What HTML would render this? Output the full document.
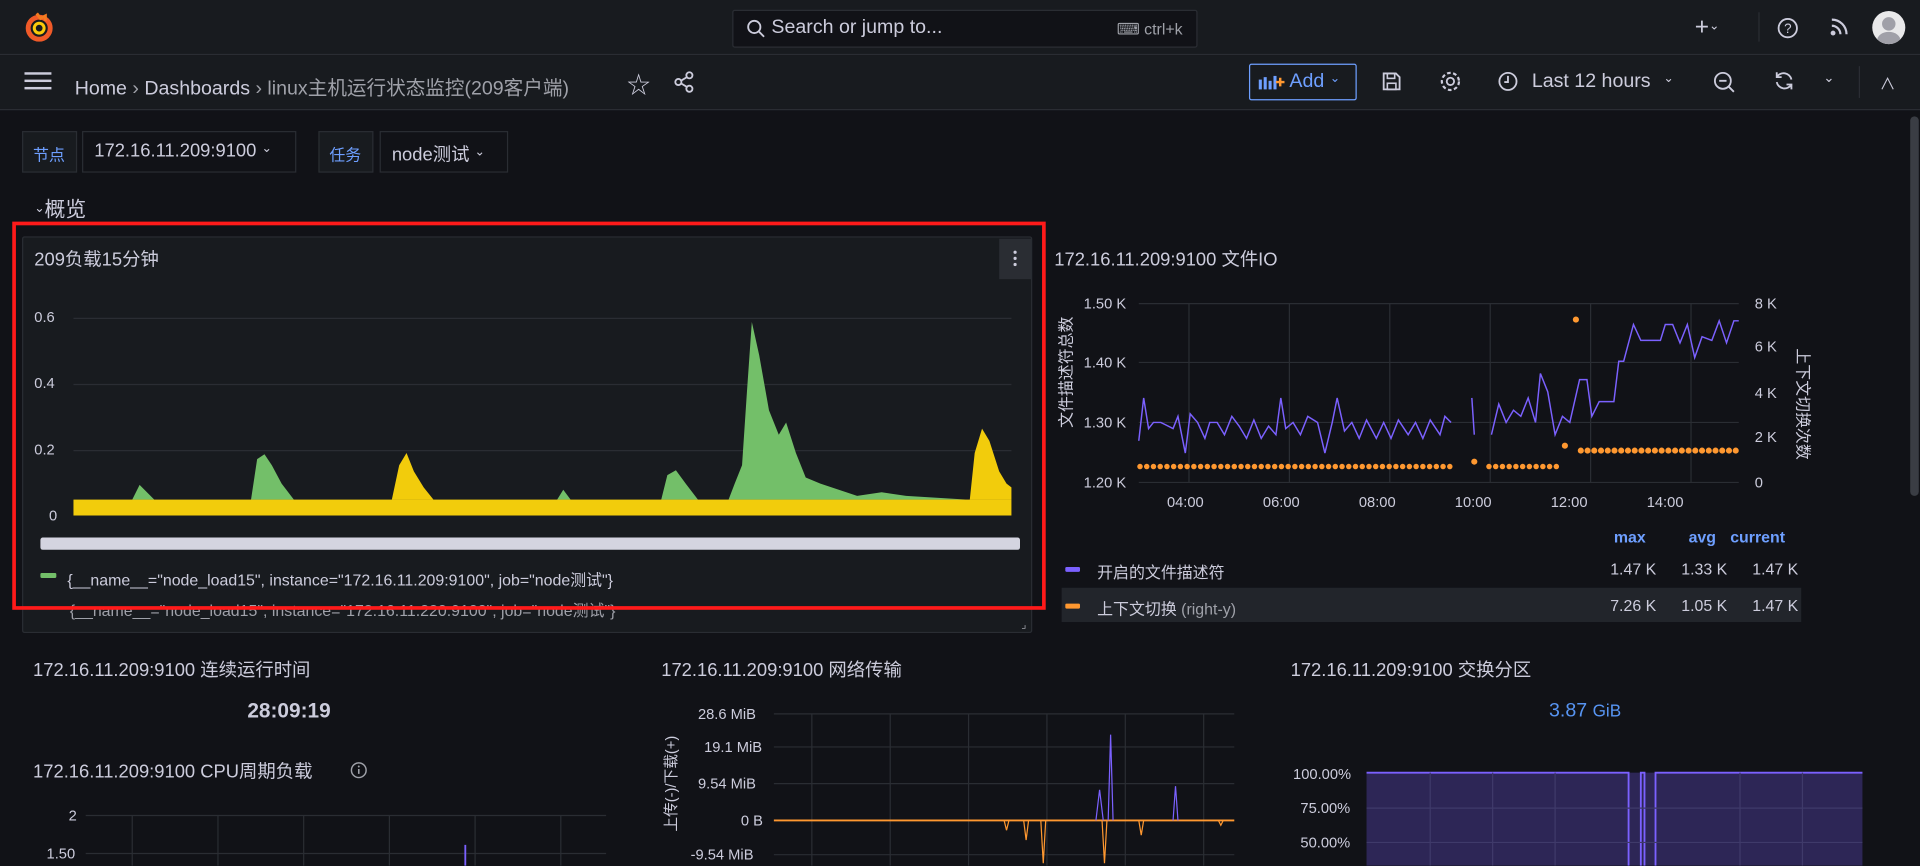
<!DOCTYPE html>
<html><head><meta charset="utf-8"><style>
*{box-sizing:border-box;margin:0;padding:0}
html,body{width:1920px;height:866px;overflow:hidden;background:#111217}
#w{position:absolute;left:0;top:0;width:1568px;height:707px;transform:scale(1.22449);transform-origin:0 0;font-family:"Liberation Sans","Noto Sans CJK SC",sans-serif;color:#ccccdc;font-size:14px}
.a{position:absolute;white-space:nowrap}
.bar{position:absolute;left:0;width:1568px;background:#181b1f;border-bottom:1px solid #2a2d33}
.lbl{font-size:12px;color:#ccccdc}
.chev{display:inline-block;font-size:10px;vertical-align:4px}
</style></head><body><div id="w">
<div class="bar" style="top:0;height:45px"></div>
<div class="bar" style="top:45px;height:45px"></div>
<svg class="a" style="left:20px;top:9px" width="24" height="26" viewBox="0 0 24 26"><circle cx="12" cy="14" r="9" fill="none" stroke="#f05a28" stroke-width="4"/><circle cx="12" cy="14" r="4" fill="none" stroke="#fbca0a" stroke-width="2.5"/><path d="M10 2l3 4 4-2 0 4" stroke="#f47a20" stroke-width="2.5" fill="none"/></svg>
<div class="a" style="left:598px;top:8px;width:380px;height:31px;background:#111217;border:1px solid #2a2d33;border-radius:2px"></div>
<svg class="a" style="left:609px;top:15px" width="16" height="16"><circle cx="7" cy="7" r="5" fill="none" stroke="#ccccdc" stroke-width="1.5"/><path d="M11 11l4 4" stroke="#ccccdc" stroke-width="1.5"/></svg>
<div class="a" style="left:630px;top:14px;font-size:16px;color:#ccccdc">Search or jump to...</div>
<div class="a" style="left:912px;top:16px;font-size:13px;color:#9fa1a9">⌨ ctrl+k</div>
<div class="a" style="left:1384px;top:11px;font-size:20px;color:#ccccdc">+<span class="chev"> ⌄</span></div>
<div class="a" style="left:1436px;top:10px;width:1px;height:24px;background:#2a2d33"></div>
<svg class="a" style="left:1451px;top:14px" width="18" height="18"><circle cx="9" cy="9" r="7.5" fill="none" stroke="#ccccdc" stroke-width="1.5"/><text x="6" y="13" font-size="11" fill="#ccccdc" font-family="Liberation Sans">?</text></svg>
<svg class="a" style="left:1494px;top:14px" width="16" height="16"><circle cx="3" cy="13" r="2" fill="#ccccdc"/><path d="M2 7a7 7 0 0 1 7 7M2 2a12 12 0 0 1 12 12" stroke="#ccccdc" stroke-width="1.8" fill="none"/></svg>
<div class="a" style="left:1529px;top:9px;width:27px;height:27px;border-radius:50%;background:#e9e9ea;overflow:hidden"><div style="position:absolute;left:8px;top:5px;width:11px;height:11px;border-radius:50%;background:#a0a0a8"></div><div style="position:absolute;left:4px;top:17px;width:19px;height:14px;border-radius:50%;background:#a0a0a8"></div></div>
<div class="a" style="left:20px;top:59px;width:22px;height:2px;background:#ccccdc;box-shadow:0 6px 0 #ccccdc,0 12px 0 #ccccdc"></div>
<div class="a" style="left:61px;top:58px;font-size:16px;color:#ccccdc">Home <span style="color:#9fa1a9">›</span> Dashboards <span style="color:#9fa1a9">›</span> <span style="color:#9fa1a9">linux主机运行状态监控(209客户端)</span></div>
<div class="a" style="left:512px;top:55px;font-size:19px;color:#ccccdc">☆</div>
<svg class="a" style="left:550px;top:58px" width="18" height="18"><circle cx="13" cy="3.5" r="2.5" fill="none" stroke="#ccccdc" stroke-width="1.5"/><circle cx="4" cy="9" r="2.5" fill="none" stroke="#ccccdc" stroke-width="1.5"/><circle cx="13" cy="14.5" r="2.5" fill="none" stroke="#ccccdc" stroke-width="1.5"/><path d="M6 8l5-3M6 10l5 3" stroke="#ccccdc" stroke-width="1.5"/></svg>
<div class="a" style="left:1020px;top:52px;width:88px;height:30px;border:1px solid #6e9fff;border-radius:2px"></div>
<svg class="a" style="left:1027px;top:60px" width="22" height="14"><rect x="1" y="5" width="2.5" height="8" fill="#6e9fff"/><rect x="5" y="3" width="2.5" height="10" fill="#6e9fff"/><rect x="9" y="6" width="2.5" height="7" fill="#6e9fff"/><rect x="13" y="2" width="2.5" height="11" fill="#6e9fff"/><path d="M15 7h7M18.5 3.5v7" stroke="#ff9830" stroke-width="2"/></svg>
<div class="a" style="left:1053px;top:58px;font-size:16px;color:#6e9fff">Add <span class="chev">⌄</span></div>
<svg class="a" style="left:1128px;top:58px" width="17" height="17"><path d="M2 2h10l3 3v10H2z" fill="none" stroke="#ccccdc" stroke-width="1.5"/><rect x="5" y="2" width="6" height="4" fill="none" stroke="#ccccdc" stroke-width="1.3"/><rect x="5" y="10" width="7" height="5" fill="none" stroke="#ccccdc" stroke-width="1.3"/></svg>
<svg class="a" style="left:1175px;top:57px" width="19" height="19"><circle cx="9.5" cy="9.5" r="3" fill="none" stroke="#ccccdc" stroke-width="1.5"/><circle cx="9.5" cy="9.5" r="7" fill="none" stroke="#ccccdc" stroke-width="1.8" stroke-dasharray="3 2"/></svg>
<svg class="a" style="left:1223px;top:58px" width="17" height="17"><circle cx="8.5" cy="8.5" r="7" fill="none" stroke="#ccccdc" stroke-width="1.5"/><path d="M8.5 4v5h-3" stroke="#ccccdc" stroke-width="1.5" fill="none"/></svg>
<div class="a" style="left:1251px;top:58px;font-size:16px;color:#ccccdc">Last 12 hours <span class="chev" style="margin-left:6px">⌄</span></div>
<svg class="a" style="left:1399px;top:58px" width="18" height="18"><circle cx="8" cy="8" r="6.5" fill="none" stroke="#ccccdc" stroke-width="1.5"/><path d="M5 8h6M13 13l4 4" stroke="#ccccdc" stroke-width="1.5"/></svg>
<svg class="a" style="left:1448px;top:57px" width="18" height="18"><path d="M15 8a6.5 6.5 0 0 0-12-2M3 10a6.5 6.5 0 0 0 12 2" fill="none" stroke="#ccccdc" stroke-width="1.5"/><path d="M3 2v4h4M15 16v-4h-4" fill="none" stroke="#ccccdc" stroke-width="1.5"/></svg>
<div class="a" style="left:1489px;top:57px;font-size:11px">⌄</div>
<div class="a" style="left:1518px;top:54px;width:1px;height:26px;background:#2a2d33"></div>
<div class="a" style="left:1535px;top:58px;font-size:13px">∧</div>
<div class="a" style="left:1560px;top:95px;width:7px;height:310px;background:#3a3d44;border-radius:4px"></div>
<div class="a" style="left:18px;top:107px;width:45px;height:34px;background:#181b1f;border:1px solid #2a2d33"></div>
<div class="a" style="left:27px;top:116px;font-size:13px;color:#6e9fff">节点</div>
<div class="a" style="left:67px;top:107px;width:175px;height:34px;background:#111217;border:1px solid #2a2d33"></div>
<div class="a" style="left:77px;top:115px;font-size:15px">172.16.11.209:9100 <span class="chev">⌄</span></div>
<div class="a" style="left:260px;top:107px;width:45px;height:34px;background:#181b1f;border:1px solid #2a2d33"></div>
<div class="a" style="left:269px;top:116px;font-size:13px;color:#6e9fff">任务</div>
<div class="a" style="left:310px;top:107px;width:105px;height:34px;background:#111217;border:1px solid #2a2d33"></div>
<div class="a" style="left:320px;top:115px;font-size:15px">node测试 <span class="chev">⌄</span></div>
<div class="a" style="left:28px;top:157px;font-size:17px"><span class="chev">⌄</span>概览</div>
<div class="a" style="left:18px;top:193px;width:825px;height:324px;background:#181b1f;border:1px solid #2a2d33;border-radius:2px"></div>
<div class="a" style="left:28px;top:201px;font-size:15px">209负载15分钟</div>
<div class="a" style="left:816px;top:195px;width:26px;height:33px;background:#2a2d33"></div>
<svg class="a" style="left:826px;top:203px" width="6" height="16"><circle cx="3" cy="3" r="1.3" fill="#ccccdc"/><circle cx="3" cy="8" r="1.3" fill="#ccccdc"/><circle cx="3" cy="13" r="1.3" fill="#ccccdc"/></svg>
<div class="a lbl" style="left:28px;top:252px">0.6</div>
<div class="a lbl" style="left:28px;top:306px">0.4</div>
<div class="a lbl" style="left:28px;top:360px">0.2</div>
<div class="a lbl" style="left:40px;top:414px">0</div>
<svg class="a" style="left:0;top:0" width="860" height="520">
<g stroke="#2a2d33" stroke-width="1"><path d="M60 260H826M60 314H826M60 368H826"/></g>
<path fill="#73bf69" d="M60 408 L108 408 L114 396 L120 402 L126 408 L205 408 L210 375 L216 371 L222 380 L230 395 L240 408 L455 408 L460 400 L466 408 L540 408 L545 388 L552 384 L560 395 L570 408 L595 408 L600 395 L606 380 L610 320 L614 263 L620 290 L628 335 L636 355 L642 345 L650 370 L658 390 L670 395 L685 400 L700 405 L720 402 L740 405 L790 408 Z"/>
<path fill="#f2cc0c" d="M320 408 L326 380 L332 370 L338 385 L346 398 L354 408 Z M792 408 L796 370 L802 350 L808 360 L816 385 L822 395 L826 398 L826 408 Z"/>
<rect x="60" y="408" width="766" height="13" fill="#f2cc0c"/>
<rect x="33" y="439" width="800" height="10" rx="2" fill="#d4d4e0"/>
<rect x="33" y="468" width="13" height="4" rx="1" fill="#73bf69"/>
</svg>
<div class="a" style="left:55px;top:463px;font-size:13px">{__name__="node_load15", instance="172.16.11.209:9100", job="node测试"}</div>
<div class="a" style="left:57px;top:488px;font-size:13px;color:#9fa1a9">{__name__="node_load15", instance="172.16.11.220:9100", job="node测试"}</div>
<div class="a" style="left:10px;top:181px;width:844px;height:317px;border:3px solid #ff1a1a"></div>
<div class="a" style="left:861px;top:201px;font-size:15px">172.16.11.209:9100 文件IO</div>
<svg class="a" style="left:0;top:0" width="1568" height="520">
<g stroke="#2a2d33"><path d="M930 248H1420M930 296H1420M930 345H1420M930 394H1420M971 248V394M1053 248V394M1135 248V394M1217 248V394M1299 248V394M1381 248V394"/></g>
<polyline fill="none" stroke="#7b61ff" stroke-width="1.2" points="930,360 934,325 938,350 942,345 948,345 952,347 958,350 962,340 968,370 972,338 978,345 984,358 988,345 994,345 1000,355 1006,340 1012,348 1018,358 1024,343 1030,358 1036,348 1042,355 1046,325 1050,350 1056,345 1062,355 1068,340 1076,345 1082,370 1088,345 1092,325 1098,352 1104,345 1110,358 1116,343 1124,358 1130,345 1136,358 1142,343 1150,355 1156,345 1162,358 1168,343 1176,355 1180,340 1185,345"/>
<polyline fill="none" stroke="#7b61ff" stroke-width="1.2" points="1202,325 1204,355"/>
<polyline fill="none" stroke="#7b61ff" stroke-width="1.2" points="1218,355 1224,330 1230,345 1236,335 1242,340 1248,325 1254,345 1258,305 1264,320 1270,355 1276,340 1282,345 1290,310 1296,310 1300,340 1306,328 1318,328 1322,295 1326,295 1334,265 1340,278 1356,278 1360,265 1366,265 1372,280 1378,265 1384,292 1390,275 1398,278 1404,262 1410,280 1416,262 1420,262"/>
<g fill="#ff9830">
<path d="M931 381H1186" stroke="#ff9830" stroke-width="4.5" stroke-linecap="round" stroke-dasharray="0 5.5"/>
<path d="M1216 381H1276" stroke="#ff9830" stroke-width="4.5" stroke-linecap="round" stroke-dasharray="0 5.5"/>
<path d="M1291 368H1418" stroke="#ff9830" stroke-width="5" stroke-linecap="round" stroke-dasharray="0 5.5"/>
<circle cx="1204" cy="377" r="2.5"/><circle cx="1278" cy="364" r="2.5"/><circle cx="1287" cy="261" r="2.5"/>
</g>
<rect x="867" y="480" width="604" height="28" fill="#22252b"/>
<rect x="870" y="463" width="12" height="4" rx="1" fill="#7b61ff"/>
<rect x="870" y="493" width="12" height="4" rx="1" fill="#ff9830"/>
<text x="-304" y="875" transform="rotate(-90)" font-size="13" fill="#ccccdc" font-family="Liberation Sans,Noto Sans CJK SC,sans-serif" text-anchor="middle">文件描述符总数</text>
<text x="1468" y="330" transform="rotate(90 1468 330)" font-size="13" fill="#ccccdc" font-family="Liberation Sans,Noto Sans CJK SC,sans-serif" text-anchor="middle">上下文切换次数</text>
</svg>
<div class="a lbl" style="left:885px;top:241px">1.50 K</div>
<div class="a lbl" style="left:885px;top:289px">1.40 K</div>
<div class="a lbl" style="left:885px;top:338px">1.30 K</div>
<div class="a lbl" style="left:885px;top:387px">1.20 K</div>
<div class="a lbl" style="left:1433px;top:241px">8 K</div>
<div class="a lbl" style="left:1433px;top:276px">6 K</div>
<div class="a lbl" style="left:1433px;top:314px">4 K</div>
<div class="a lbl" style="left:1433px;top:350px">2 K</div>
<div class="a lbl" style="left:1433px;top:387px">0</div>
<div class="a lbl" style="left:953px;top:403px;width:520px;word-spacing:45px">04:00 06:00 08:00 10:00 12:00 14:00</div>
<div class="a" style="left:1318px;top:431px;font-size:13px;font-weight:bold;color:#6e9fff">max</div>
<div class="a" style="left:1379px;top:431px;font-size:13px;font-weight:bold;color:#6e9fff">avg</div>
<div class="a" style="left:1413px;top:431px;font-size:13px;font-weight:bold;color:#6e9fff">current</div>
<div class="a" style="left:896px;top:457px;font-size:13px">开启的文件描述符</div>
<div class="a" style="left:1315px;top:457px;font-size:13px">1.47 K</div><div class="a" style="left:1373px;top:457px;font-size:13px">1.33 K</div><div class="a" style="left:1431px;top:457px;font-size:13px">1.47 K</div>
<div class="a" style="left:896px;top:487px;font-size:13px">上下文切换 <span style="color:#9fa1a9">(right-y)</span></div>
<div class="a" style="left:1315px;top:487px;font-size:13px">7.26 K</div><div class="a" style="left:1373px;top:487px;font-size:13px">1.05 K</div><div class="a" style="left:1431px;top:487px;font-size:13px">1.47 K</div>
<div class="a" style="left:834px;top:505px;font-size:9px;color:#9fa1a9">⌟</div>
<div class="a" style="left:27px;top:536px;font-size:15px">172.16.11.209:9100 连续运行时间</div>
<div class="a" style="left:202px;top:571px;font-size:17px;font-weight:bold">28:09:19</div>
<div class="a" style="left:27px;top:619px;font-size:15px">172.16.11.209:9100 CPU周期负载</div>
<svg class="a" style="left:286px;top:622px" width="14" height="14"><circle cx="7" cy="7" r="6" fill="none" stroke="#9fa1a9" stroke-width="1.2"/><path d="M7 6v4" stroke="#9fa1a9" stroke-width="1.3"/><circle cx="7" cy="4" r="0.8" fill="#9fa1a9"/></svg>
<div class="a lbl" style="left:56px;top:659px">2</div>
<div class="a lbl" style="left:38px;top:690px">1.50</div>
<div class="a" style="left:540px;top:536px;font-size:15px">172.16.11.209:9100 网络传输</div>
<div class="a" style="left:1054px;top:536px;font-size:15px">172.16.11.209:9100 交换分区</div>
<div class="a" style="left:1265px;top:572px;font-size:16px;color:#5794f2">3.87 <span style="font-size:14px">GiB</span></div>
<div class="a lbl" style="left:570px;top:576px">28.6 MiB</div>
<div class="a lbl" style="left:575px;top:603px">19.1 MiB</div>
<div class="a lbl" style="left:570px;top:633px">9.54 MiB</div>
<div class="a lbl" style="left:605px;top:663px">0 B</div>
<div class="a lbl" style="left:564px;top:691px">-9.54 MiB</div>
<div class="a lbl" style="left:1056px;top:625px">100.00%</div>
<div class="a lbl" style="left:1062px;top:653px">75.00%</div>
<div class="a lbl" style="left:1062px;top:681px">50.00%</div>
<svg class="a" style="left:0;top:520px" width="1568" height="187">
<g stroke="#2a2d33"><path d="M70 146H495M70 177H495M108 146V187M178 146V187M248 146V187M318 146V187M388 146V187M458 146V187"/>
<path d="M632 63H1008M632 90H1008M632 120H1008M632 178H1008M663 63V187M727 63V187M791 63V187M855 63V187M919 63V187M983 63V187"/></g>
<path d="M380 170V187" stroke="#7b61ff" stroke-width="1.5"/>
<text x="552" y="120" transform="rotate(-90 552 120)" font-size="12" fill="#ccccdc" font-family="Liberation Sans,Noto Sans CJK SC,sans-serif" text-anchor="middle">上传(-)/下载(+)</text>
<path d="M632 150H1008" stroke="#ff9830" stroke-width="1.5"/>
<path d="M820 150l2 8 2-8M836 150l2 16 2-16M850 150l2 35 2-35M900 150l2 35 2-35M930 150l2 12 2-12M995 150l2 4 2-4" stroke="#ff9830" fill="none"/>
<path d="M895 150l3-25 3 25M905 150l2-70 2 70M958 150l2-28 2 28" stroke="#7b61ff" fill="none"/>
<rect x="1116" y="111" width="405" height="76" fill="#2d2656"/>
<path d="M1116 111H1330V187M1340 187V111H1343V187M1352 187V111H1521" stroke="#7b61ff" stroke-width="1.5" fill="none"/>
<g stroke="#3f3a6a"><path d="M1116 140H1521M1116 168H1521M1168 111V187M1219 111V187M1270 111V187M1421 111V187M1472 111V187"/></g>
</svg>
</div></body></html>
